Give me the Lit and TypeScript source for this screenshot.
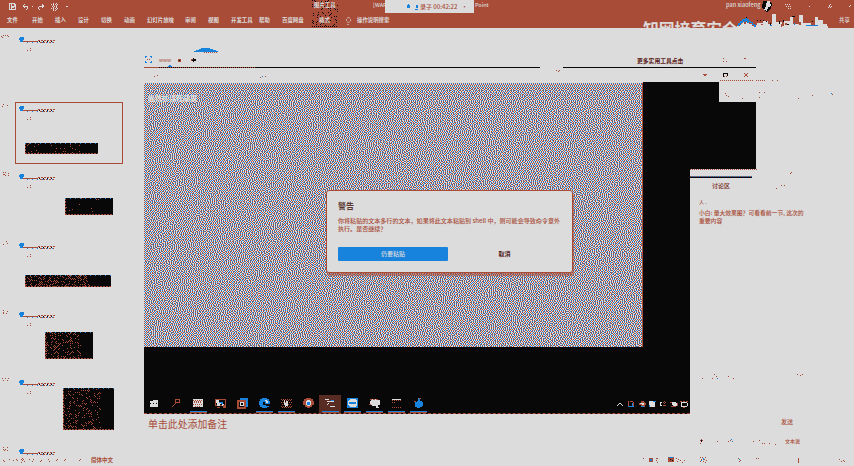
import { LitElement, html, svg, css } from "lit";
import { customElement } from "lit/decorators.js";

const RED = "#a84c38", BLUE = "#1883dc", LIGHT = "#dcdcdc", INK = "#080808";

/* Error diffusion of a grey desktop into the light / red / blue palette. */
function weave(w: number, h: number) {
  const pal = [[220, 220, 220], [168, 76, 56], [24, 131, 220]];
  const buf: number[][] = Array.from({ length: w * h }, () => [160, 160, 168]);
  const out = ["", ""];
  for (let y = 0; y < h; y++)
    for (let x = 0; x < w; x++) {
      const c = buf[y * w + x];
      let best = 0, bd = 1e9;
      pal.forEach((p, i) => {
        const d = (p[0] - c[0]) ** 2 + (p[1] - c[1]) ** 2 + (p[2] - c[2]) ** 2;
        if (d < bd) { bd = d; best = i; }
      });
      if (best) out[best - 1] += `M${x} ${y}h1v1h-1z`;
      const spread: [number, number, number][] = [[1, 0, 7], [-1, 1, 3], [0, 1, 5], [1, 1, 1]];
      for (const [dx, dy, k] of spread) {
        const nx = x + dx, ny = y + dy;
        if (nx < 0 || nx >= w || ny >= h) continue;
        for (let j = 0; j < 3; j++) buf[ny * w + nx][j] += ((c[j] - pal[best][j]) * k) / 16;
      }
    }
  return out;
}
const fabric = weave(499, 264);

const dots = (s: string) => s.trim().split(/\s+/).map((p) => `M${p.replace(",", " ")}h1v1h-1z`).join("");
const scatter = (w: number, h: number, red: string) => html`
  <svg width=${w} height=${h} shape-rendering="crispEdges"><path fill=${RED} d=${dots(red)} /></svg>`;

const ramp = (w: number, h: number, density: number, seed: number) => {
  let s = seed, d = "";
  for (let y = 0; y < h; y++)
    for (let x = 0; x < w; x++) {
      s = (s * 1103515245 + 12345) % 2147483648;
      if (s / 2147483648 < density && (x + y) % 2 === 0) d += `M${x} ${y}h1v1h-1z`;
    }
  return d;
};

@customElement("ribbon-bar")
class RibbonBar extends LitElement {
  static styles = css`
    :host { display: block; position: relative; height: 28px; background: #a84c38; color: #dcdcdc; font: 500 5.4px "Noto Sans CJK SC", sans-serif; }
    .tabs { position: absolute; left: 7px; top: 16px; height: 9px; display: grid; align-items: center; line-height: 9px; white-space: nowrap; font-weight: 700;
      grid-template-columns: 25px 23px 23px 23px 23px 23px 38px 23px 23px 28px 23px 37px 26px 12px auto; }
    .quick { position: absolute; left: 8px; top: 2px; }
    .sel { position: absolute; left: 312px; top: 0; }
    .ctx { position: absolute; left: 314px; top: 1px; line-height: 9px; font-weight: 700; }
    .doc { position: absolute; left: 373px; top: 1px; line-height: 9px; }
    .doc2 { position: absolute; left: 475px; top: 1px; line-height: 9px; }
    .call { position: absolute; left: 385px; top: 0; width: 89px; height: 13px; background: #dcdcdc; color: #a84c38; display: flex; align-items: center; gap: 4px; padding-left: 22px; box-sizing: border-box; font-size: 6px; white-space: nowrap; }
    .call span:first-of-type { margin-left: -3px; }
    .user { position: absolute; left: 726px; top: 1px; line-height: 9px; font-size: 5.6px; }
    .win { position: absolute; left: 760px; top: 0; }
    .brand { position: absolute; left: 643px; top: 19px; font-size: 15.8px; line-height: 20px; font-weight: 700; white-space: nowrap; }
    .sky { position: absolute; left: 737px; top: 13px; }
    .share { position: absolute; left: 839px; top: 16px; line-height: 9px; }
  `;
  render() {
    const tabs = ["文件", "开始", "插入", "设计", "切换", "动画", "幻灯片放映", "审阅", "视图", "开发工具", "帮助", "百度网盘", "格式"];
    return html`
      <div class="quick"><svg width="64" height="10" fill="none" stroke=${LIGHT} shape-rendering="crispEdges">
        <path d="M1.5 1.5h5l1 1v5h-6zM3 2v2h3V2M3 7V5h3" /><path d="M15 4h4l1 2-2 2M15 4l2-2M15 4l2 2M36 4h-4l-2 2 2 2M36 4l-2-2v4" />
        <path stroke-dasharray="1 1" d="M43 2h7M44 4h6M43 6h7M45 8h4M45 1v8M48 1v8" /><path d="M24 4.5h1M58 4.5h2" /></svg></div>
      <svg class="sel" width="26" height="28" shape-rendering="crispEdges"><path fill=${INK} d=${ramp(26, 26, 0.2, 41)} /><path stroke=${INK} stroke-dasharray="1 1" d="M0 26.5h25" /></svg>
      <div class="ctx">图片工具</div><div class="doc">[WAF]</div>
      <div class="doc2">Point</div>
      <nav class="tabs">${tabs.map((t) => html`<span>${t}</span>`)}
        <svg width="8" height="9" fill="none" stroke=${LIGHT}><path stroke-dasharray="1.2 .8" d="M3.5 1L6 4 3.5 7 1 4zM2.5 8.5h2" /></svg><span>操作说明搜索</span></nav>
      <div class="call"><svg width="4" height="5"><path fill=${BLUE} d="M1 0h1v1h1v3H0V1h1z" /></svg>
        <svg width="4" height="8"><path fill=${BLUE} d="M1 2h2v3H1zM0 6h3v1H0z" /></svg><span>录子 00:42:22</span><span>·</span></div>
      <div class="user">pan xiaofeng</div>
      <svg class="win" width="94" height="12" shape-rendering="crispEdges" fill="none" stroke=${LIGHT}>
        <path stroke="none" fill=${INK} d="M3 1h7l2 3-1 5-4 3-5-4z" /><path stroke="none" fill=${LIGHT} d="M7 1h3l1 5-3 1-1 4-3-1 2-4z" />
        <path stroke-dasharray="1 1" d="M25 4h6M26 6h5M28 8h3M68 8l4-5M70 8l3-3" /><path d="M49 6.5h1M89 7l2-2" /></svg>
      <svg class="sky" width="104" height="15" shape-rendering="crispEdges">
        <path fill=${LIGHT} d="M0 15v-2h3v-2h2v-2h2v2h2V9h3v2h3v2h3v2zM18 15v-3h2v-2h6V8h5v3h4V1h4v8h6v4h2V8h6V4h3v7h6V2h4v8h8v2h4V4h3v3h5v4h5v4z" />
        <path fill=${BLUE} d="M0 12h1v-2h2V8h2V6h3V5h2v1h2v2h2v1h2v2h2v1h1v2h-2v-2h-2v-2h-2V9h-1v1h-2V8H9v1H7V8H6v2H4v2H2v1H0z" />
        <path fill=${INK} d="M9 4h1v1H9zM20 7h1v1h-1zM23 7h1v1h-1zM26 7h1v1h-1zM29 8h1v1h-1zM33 10h1v2h-1zM42 8h1v3h-1zM46 7h1v2h-1zM55 3h3v1h-3zM50 11h2v1h-2zM75 8h1v1h-1z" />
        <path fill=${BLUE} d="M33 12h2v1h-2zM69 12h12v1H69zM57 10h1v2h-1z" /><path fill=${RED} d="M24 11h2v1h-2zM44 11h1v3h-1zM48 10h2v2h-2zM62 9h2v3h-2zM90 10h2v3h-2z" />
      </svg><div class="brand">知网培育安全</div><div class="share">共享</div>`;
  }
}

interface Slide { x: number; y: number; w: number; h: number; d: number }

@customElement("slide-rail")
class SlideRail extends LitElement {
  static styles = css`
    :host { display: block; width: 141px; height: 427px; overflow: hidden; padding-top: 5px; box-sizing: border-box; }
    .row { display: grid; grid-template-columns: 15px 108px; height: 68.7px; }
    .num { padding-top: 2px; }
    .card { position: relative; height: 62px; box-sizing: border-box; }
    .on { outline: 1px solid #a84c38; outline-offset: -1px; }
    svg { display: block; }
  `;
  slides: (Slide | null)[] = [null, { x: 10, y: 41, w: 73, h: 11, d: 0.06 }, { x: 50, y: 28, w: 48, h: 17, d: 0.02 },
    { x: 10, y: 36, w: 86, h: 12, d: 0.3 }, { x: 30, y: 24, w: 48, h: 27, d: 0.22 }, { x: 48, y: 12, w: 51, h: 42, d: 0.17 }, null];
  render() {
    return this.slides.map((s, i) => html`<div class="row">
      <div class="num">${scatter(14, 8, ["1,1 3,0 5,0 7,0 2,2 8,1", "3,0 2,2 7,1", "3,0 5,0 3,2 8,1 5,3 8,3 4,2", "6,0 3,3 7,2", "3,0 3,2 3,3 7,1 6,3", "2,0 5,0 8,0 3,2 7,2", "3,0 5,2 7,0 4,3 7,3 3,2"][i])}</div>
      <div class=${"card" + (i === 1 ? " on" : "")}>
        <svg width="108" height="62" shape-rendering="crispEdges">
          <path fill=${BLUE} d="M5 4h4v3H8v2H5V7H4V5h1zM8 8h3v1H8z" />
          <path stroke=${RED} d="M8 8.5h15" /><path stroke=${RED} stroke-dasharray="2 1" d="M23 7.5h17M25 9.5h15" /><path stroke=${INK} stroke-dasharray="1 3" d="M24 8.5h16" /><path stroke=${BLUE} stroke-dasharray="1 4" d="M12 9.5h28" />
          <path fill=${RED} d="M15 15h1v1h-1zM12 17h1v1h-1zM15 17h1v1h-1z" />
          ${s ? svg`<g transform=${`translate(${s.x} ${s.y})`}><rect width=${s.w} height=${s.h} fill=${INK} />
            <path fill=${RED} d=${ramp(Math.round(s.w * 0.75), s.h, s.d * 1.3, 17 + i * 71)} />
            <path stroke=${RED} stroke-dasharray="2 1" d=${`M0 ${s.h - 0.5}H${s.w}M.5 0V${s.h}`} /><path stroke=${BLUE} stroke-dasharray="1 4" d=${`M0 .5H${s.w}`} /></g>` : ""}
        </svg>
      </div></div>`);
  }
}

@customElement("paste-dialog")
class PasteDialog extends LitElement {
  static styles = css`
    :host { display: flex; flex-direction: column; box-sizing: border-box; width: 247px; height: 83px; padding: 10px 11px; background: #dcdcdc; border: 1px solid #a84c38; border-radius: 3px; box-shadow: 1px 3px 1px #a84c3890; color: #a84c38; font: 500 6.05px "Noto Sans CJK SC", sans-serif; }
    h1 { margin: 0; font-size: 8px; line-height: 9px; height: 16px; color: #5a3830; }
    p { margin: 0; line-height: 8px; height: 30px; white-space: nowrap; }
    .acts { display: flex; line-height: 14px; text-align: center; }
    .go { width: 111px; height: 14px; border-radius: 1px; background: #1883dc; color: #dcdcdc; }
    .no { width: 114px; color: #502018; font-weight: 700; }
  `;
  render() {
    return html`<h1>警告</h1>
      <p>你将粘贴的文本多行的文本，如果将此文本粘贴到 shell 中，则可能会导致命令意外<br />执行。是否继续？</p>
      <div class="acts"><div class="go">仍要粘贴</div><div class="no">取消</div></div>`;
  }
}

@customElement("task-bar")
class TaskBar extends LitElement {
  static styles = css`
    :host { display: flex; justify-content: space-between; height: 19px; width: 546px; box-sizing: border-box; border-bottom: 1px dashed #a84c38; }
    .apps, .tray { display: flex; }
    .apps { margin-left: -1px; }
    .tray { padding-top: 5px; }
    .cell { width: 22px; height: 18px; display: grid; justify-items: center; grid-template-rows: 16px 2px; }
    .live { background: linear-gradient(#1883dc, #1883dc) 3px 16px / 17px 1px no-repeat, linear-gradient(#a84c38, #a84c38) 3px 17px / 17px 1px no-repeat; }
    .on { background-color: #582c22; }
    svg { display: block; }
  `;
  icons = [
    svg`<path fill=${LIGHT} d="M1 6h3V5h5v7H1z"/><path stroke=${INK} stroke-dasharray="1 2" d="M1 8.500h7"/>`,
    svg`<path fill="none" stroke=${RED} d="M4.500 4.500h4v3h-4zM5 8l-4 4"/>`,
    svg`<path fill=${LIGHT} d="M0 4h10v8H0z"/><path stroke=${RED} stroke-dasharray="1 1" d="M0 5.500h10M1 7.500h8M0 9.500h9M2 11.500h6M1 6.500h8"/>`,
    svg`<path fill="none" stroke=${RED} d="M.5 4.500h10v6h-10z"/><path fill=${LIGHT} d="M1 5h3v2h2v2h3v2H7V9H5v2H2z"/><path fill=${BLUE} d="M4 7h2v1H4zM6 7h2v2H6z"/><path fill=${RED} d="M2 12h3v1H2zM8 10h3v3H8z"/>`,
    svg`<path fill=${BLUE} d="M3 3h8v9H3z"/><path fill=${INK} stroke=${RED} stroke-width="2" d="M1 6h7v7H1z"/><path fill="none" stroke=${LIGHT} d="M3.500 7.500h3v3h-3z"/>`,
    svg`<path fill=${BLUE} d="M3 3h5v1h2v2h1v3H6V7H4v3h3v1h3v1H8v1H3v-1H1v-2H0V6h1V4h2z"/><path fill=${LIGHT} d="M6 5h2v1h1v2H7V6H6z"/>`,
    svg`<path stroke=${RED} stroke-dasharray="1 1" d="M0 4.500h11M1 5.500h10M0 7.500h11M1 9.500h10M0 11.500h11M1 12.500h9"/><path fill=${LIGHT} d="M3 5h1v3h1V6h2v5H5v1H4v-2H3z"/>`,
    svg`<path fill=${RED} d="M3 3h5v1h2v2h1v4H9v2H7v1H4v-1H2v-2H0V6h1V4h2z"/><path fill=${LIGHT} d="M3 6h1V5h3v1h1v4H7v1H4v-1H3z"/><path fill=${BLUE} d="M4 7h3v3H4z"/>`,
    svg`<path fill="none" stroke=${LIGHT} d="M0 4.500h4M2 6.500h7M4 8l-2 2M5 11.500h5"/><path fill=${BLUE} d="M6 5h3v1H6z"/>`,
    svg`<path fill=${BLUE} d="M0 3h11v10H0z"/><path fill=${LIGHT} d="M3 4h5l2 2v4l-2 2H3l-2-2V6z"/><path stroke=${BLUE} stroke-width="2" d="M2 8h7"/>`,
    svg`<path fill=${LIGHT} d="M2 4h7v1h2v5H9v2h1v1H7v-2H3v-1H1V6h1z"/><path stroke=${RED} stroke-dasharray="2 1" d="M1 4.500h8M0 9.500h3"/>`,
    svg`<path stroke=${LIGHT} d="M1 4.500h9"/><path stroke=${RED} stroke-dasharray="1 1" d="M1 5.500h9M1 7.500h3M1 12.500h9"/>`,
    svg`<path fill=${BLUE} d="M5 3h2v3h2v1h1v4H9v1H7v1H4v-1H2V7h2V6h1z"/><path fill=${RED} d="M6 3h2v1H6zM1 6h2v1H1z"/>`,
  ];
  tray = [
    svg`<path fill="none" stroke=${LIGHT} d="M2 6l3-3 3 3"/>`,
    svg`<path fill="none" stroke=${RED} d="M2.500 1v5M4 1.500h3.500V6"/><path fill=${BLUE} d="M2 6h6v1H2zM6 3h1v3H6z"/>`,
    svg`<path fill=${RED} d="M4 1h3v1h1v1h1v2H8v2H4V5H2V3h2z"/><path fill=${LIGHT} d="M3 3h4v1H3zM5 4h2v1H5z"/><path fill=${BLUE} d="M4 6h3v1H4z"/>`,
    svg`<path fill=${LIGHT} d="M2 1h6v6H2z"/><path fill=${BLUE} d="M6 1h3v1H6zM2 5h1v2H2z"/>`,
    svg`<path fill="none" stroke=${LIGHT} d="M4 2.500H2.500v3H4"/><path stroke=${RED} stroke-dasharray="1 1" d="M5 2.500h4M5 5.500h4M6.500 1v6"/>`,
    svg`<path fill=${LIGHT} d="M3 2h4v1h1v3H4V5H3z"/><path stroke=${RED} d="M1 2.500h2M2 6.500h5M8.500 3v3"/>`,
    svg`<path fill="none" stroke=${LIGHT} d="M2.500 2.500h6v4h-6z"/><path stroke=${RED} stroke-dasharray="2 1" d="M1 1.500h8M4 7.500h3"/>`,
  ];
  render() {
    return html`<div class="apps">${this.icons.map((ic, i) => html`<div class=${"cell" + ([2, 5, 6, 8, 9, 10, 11, 12].includes(i) ? " live" : "") + (i === 8 ? " on" : "")}>
        <svg width="11" height="16" shape-rendering="crispEdges">${ic}</svg></div>`)}</div>
      <div class="tray">${this.tray.map((ic) => html`<svg width="10.700" height="9" viewBox="0 0 10.700 9" shape-rendering="crispEdges">${ic}</svg>`)}</div>`;
  }
}

@customElement("slide-canvas")
class SlideCanvas extends LitElement {
  static styles = css`
    :host { display: block; position: relative; width: 549px; height: 427px; font: 6px "Noto Sans CJK SC", sans-serif; color: #a84c38; }
    .strip { position: absolute; left: 3px; top: 16px; }
    .title { position: absolute; left: 496px; top: 28px; font-size: 5.8px; line-height: 9px; color: #5a2018; white-space: nowrap; font-weight: 700; }
    .tab { position: absolute; left: 18px; top: 27px; line-height: 9px; font-size: 5px; }
    .screen { position: absolute; left: 3px; top: 54px; width: 612px; height: 332px; padding-top: 1px; box-sizing: border-box; background: #080808; display: flex; flex-direction: column; justify-content: space-between;
      clip-path: polygon(0 1px, 499px 1px, 499px 0, 575px 0, 575px 20px, 612px 20px, 612px 87px, 546px 87px, 546px 332px, 0 332px); }
    .desk { position: relative; width: 499px; height: 264px; background: #dcdcdc; }
    .path { position: absolute; left: 4px; top: 11px; font-size: 7px; line-height: 8px; color: #dcdcdc; font-weight: 700; white-space: nowrap; }
    paste-dialog { position: absolute; left: 182px; top: 107px; }
    .notes { position: absolute; left: 7px; top: 389px; font-size: 9.9px; line-height: 14px; white-space: nowrap; }
    svg { display: block; }
  `;
  render() {
    return html`
      <svg class="strip" width="612" height="38" shape-rendering="crispEdges">
        <path fill=${BLUE} d="M50 8V7h2V6h3V5h2V4h9v1h3v1h3v1h2v1z" /><path stroke=${RED} stroke-dasharray="1 1" d="M60 8.500h13" />
        <path fill="none" stroke=${BLUE} d="M1.500 14v-1.500H3M6 12.500h1.500V14M1.500 17v1.500H3M6 18.500h1.500V17" /><path stroke=${RED} stroke-dasharray="1 1" d="M3 15.500h4" />
        <path fill=${RED} d="M34 15h3v3h-3zM47 15h4v2h-4z" /><path fill=${INK} d="M35 16h1v1h-1zM49 14h1v1h2v2h-2v1h-1v-1h-1v-1h1z" />
        <path stroke=${INK} d="M0 23.500h396M419 23.500h193" /><path stroke=${RED} d="M0 23.500h15" /><path stroke=${RED} stroke-dasharray="1 1" d="M16 23.500h95" /><path fill=${BLUE} d="M25 21h2v1h1v1h-4v-1h1z" />
        <path fill=${RED} d="M10 32h1v1h-1zM13 31h1v1h-1zM116 33h1v1h-1zM121 32h1v1h-1zM412 26h1v1h-1zM415 26h1v1h-1zM414 27h1v1h-1zM579 14h1v1h-1zM579 17h1v1h-1zM582 17h1v1h-1zM600 14h2v1h-2z" /><path fill=${BLUE} d="M118 32h1v1h-1z" />
        <path stroke=${RED} d="M559 30.500h4M560 31.500h2M600 29l4 4M604 29l-4 4" /><path fill="none" stroke=${INK} d="M579.500 33v-3.500h3.500V32" /><path stroke=${RED} stroke-dasharray="1 1" d="M580 32.500h4" />
      </svg>
      <div class="tab">www</div>
      <div class="title">更多实用工具点击</div>
      <div class="screen">
        <div class="desk">
          <svg width="499" height="264" shape-rendering="crispEdges"><path fill=${RED} d=${fabric[0]} /><path fill=${BLUE} d=${fabric[1]} /><path stroke=${RED} d="M498.500 0v264" /></svg>
          <div class="path">最终的课程录屏</div>
          <paste-dialog></paste-dialog>
        </div>
        <task-bar></task-bar>
      </div>
      <div class="notes">单击此处添加备注</div>`;
  }
}

@customElement("chat-pane")
class ChatPane extends LitElement {
  static styles = css`
    :host { display: block; position: relative; width: 164px; height: 427px; font: 500 6px "Noto Sans CJK SC", sans-serif; color: #a84c38; }
    .marks { position: absolute; left: 0; top: 0; }
    .col { display: flex; flex-direction: column; padding-top: 154px; white-space: nowrap; line-height: 8px; }
    .head { padding-left: 22px; color: #74281b; height: 16px; }
    .who { padding-left: 9px; height: 11px; font-size: 5px; }
    .msg { padding-left: 9px; font-size: 5.8px; height: 209px; }
    .send { padding-left: 91px; height: 19px; }
    .tools { padding-left: 95px; font-size: 5px; }
    svg { display: block; }
  `;
  render() {
    return html`<div class="marks"><svg width="164" height="427" shape-rendering="crispEdges">
        <path stroke=${RED} stroke-dasharray="1 1" d="M30 52.500h33M66 52.500h10M0 141.500h67" /><path stroke=${INK} d="M0 149.500h62" /><path stroke=${BLUE} d="M0 148.500h62" />
        <path stroke=${RED} stroke-dasharray="1 1" d="M0 148.500h62" />
        <path fill=${RED} d=${dots("35,65 36,67 38,68 69,64 74,64 69,69 52,70 108,70 122,67 142,66 82,52 87,52 101,144 100,145 91,157 94,157 86,160 12,350 24,346 26,348 22,350 38,348 43,350 107,346 110,347 112,346 11,411 10,412 12,412 10,415 27,413 40,412 38,413 63,413 69,412 72,415 74,415 79,415 85,416")} />
        <path fill=${BLUE} d="M27 350h1v1h-1zM141 65h1v1h-1zM41 411h1v1h-1zM42 413h1v1h-1z" /><path fill=${INK} d="M11 412h1v2h-1z" />
      </svg></div>
      <div class="col"><div class="head">讨论区</div><div class="who">人 .</div>
        <div class="msg">小白: 量大效果图？可看看前一节, 这次的<br />重要内容</div><div class="send">发送</div><div class="tools">文本说</div></div>`;
  }
}

@customElement("app-root")
export class AppRoot extends LitElement {
  static styles = css`
    :host { display: block; width: 854px; height: 466px; overflow: hidden; background: #dcdcdc; }
    .main { display: flex; height: 427px; }
    .foot { display: flex; justify-content: space-between; height: 11px; color: #a84c38; font: 700 5.5px/11px "Noto Sans CJK SC", sans-serif; }
    .info { display: flex; }
    svg { display: block; }
  `;
  render() {
    return html`<ribbon-bar></ribbon-bar>
      <div class="main"><slide-rail></slide-rail><slide-canvas></slide-canvas><chat-pane></chat-pane></div>
      <footer class="foot">
        <div class="info"><svg width="91" height="11" shape-rendering="crispEdges"><path fill=${RED} d=${dots("3,5 4,6 9,4 13,5 16,4 17,5 21,4 22,5 23,4 24,6 22,3 21,7 29,4 32,6 33,4 40,6 41,5 48,4 49,6 56,5 57,4 64,5 65,4 80,4 79,5")} /></svg><span>简体中文</span></div>
        <svg width="214" height="11" shape-rendering="crispEdges"><path fill=${RED} d="M9 3h4v4H9zM28 2h6v5h-6zM158 3h1v5h-1z" /><path fill=${BLUE} d="M10 4h2v2h-2zM29 2h4v1h-4z" /><path fill=${INK} d="M30 4h1v1h-1zM32 5h1v1h-1z" />
          <path fill=${RED} d=${dots("3,3 16,3 17,3 16,5 17,7 36,3 38,4 37,6 40,5 42,7 44,5 60,2 62,2 65,2 61,4 64,4 66,5 60,6 63,6 65,7 98,3 100,5 99,6 116,3 118,3 199,4 201,6 203,5 204,6")} /><path fill=${BLUE} d="M63 3h1v2h-1zM61 5h1v1h-1zM99 4h1v1h-1z" /></svg>
      </footer>`;
  }
}
